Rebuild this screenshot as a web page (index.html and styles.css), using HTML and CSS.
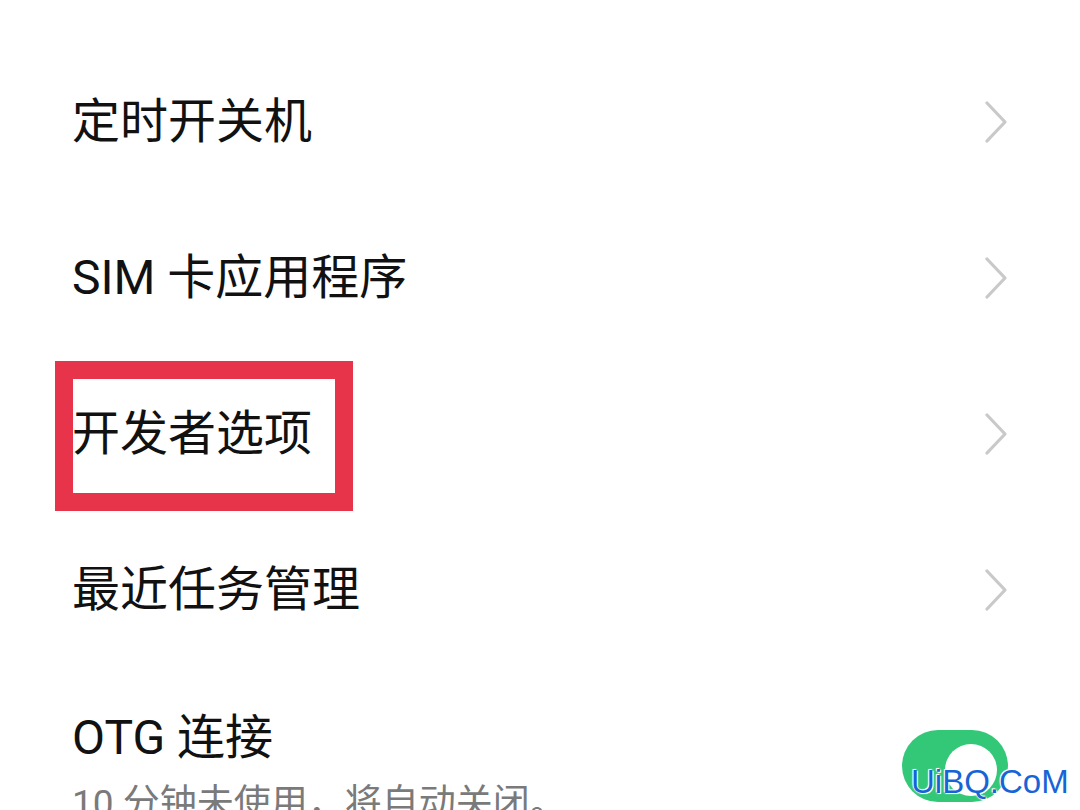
FILE: index.html
```html
<!DOCTYPE html>
<html lang="zh-CN">
<head>
<meta charset="utf-8">
<title>设置</title>
<link rel="stylesheet" href="styles.css">
</head>
<body>
<div class="list">
  <div class="row">
    <span class="title">定时开关机</span>
    <svg class="chev" width="24" height="42" viewBox="0 0 24 42"><polyline points="3,2 21,21 3,40"/></svg>
  </div>
  <div class="row">
    <span class="title">SIM 卡应用程序</span>
    <svg class="chev" width="24" height="42" viewBox="0 0 24 42"><polyline points="3,2 21,21 3,40"/></svg>
  </div>
  <div class="row marked">
    <div class="highlight"></div>
    <span class="title">开发者选项</span>
    <svg class="chev" width="24" height="42" viewBox="0 0 24 42"><polyline points="3,2 21,21 3,40"/></svg>
  </div>
  <div class="row">
    <span class="title">最近任务管理</span>
    <svg class="chev" width="24" height="42" viewBox="0 0 24 42"><polyline points="3,2 21,21 3,40"/></svg>
  </div>
  <div class="row row-sub">
    <div class="texts">
      <span class="title">OTG 连接</span>
      <span class="sub">10 分钟未使用，将自动关闭。</span>
    </div>
    <div class="toggle"><div class="knob"></div></div>
  </div>
</div>
<div class="watermark">UiBQ.CoM</div>
</body>
</html>
```

FILE: styles.css
```css
html, body {
  margin: 0;
  padding: 0;
  background: #ffffff;
  height: 810px;
  overflow: hidden;
}
body {
  font-family: Roboto, "Noto Sans CJK SC", "Noto Sans", sans-serif;
  color: #111111;
  position: relative;
}
.list {
  padding-top: 44px;
}
.row {
  height: 156px;
  display: flex;
  align-items: center;
  justify-content: space-between;
  padding: 0 72px 0 72px;
  box-sizing: border-box;
  position: relative;
}
.title {
  font-size: 48px;
  line-height: 56px;
  position: relative;
}
.chev polyline {
  fill: none;
  stroke: #c9c9c9;
  stroke-width: 3.2;
  stroke-linecap: round;
  stroke-linejoin: round;
}
.highlight {
  position: absolute;
  left: 55px;
  top: 5px;
  width: 298px;
  height: 150px;
  box-sizing: border-box;
  border: 18px solid #e8344a;
}
.row-sub {
  align-items: flex-start;
  padding-top: 42px;
}
.texts {
  display: flex;
  flex-direction: column;
}
.sub {
  font-size: 37px;
  line-height: 48px;
  margin-top: 14px;
  color: #7a7a7a;
}
.toggle {
  margin-top: 20px;
  width: 106px;
  height: 72px;
  border-radius: 36px;
  background: #33c878;
  position: relative;
}
.knob {
  position: absolute;
  right: 11px;
  top: 14px;
  width: 52px;
  height: 52px;
  border-radius: 50%;
  background: #ffffff;
}
.watermark {
  position: absolute;
  left: 911px;
  top: 762px;
  font-family: "Liberation Sans", Arial, sans-serif;
  font-size: 33px;
  line-height: 40px;
  color: #1764d6;
  text-shadow: 0 0 2px #fff, 0 0 2px #fff, 1px 1px 0 #fff, -1px -1px 0 #fff;
}
```
